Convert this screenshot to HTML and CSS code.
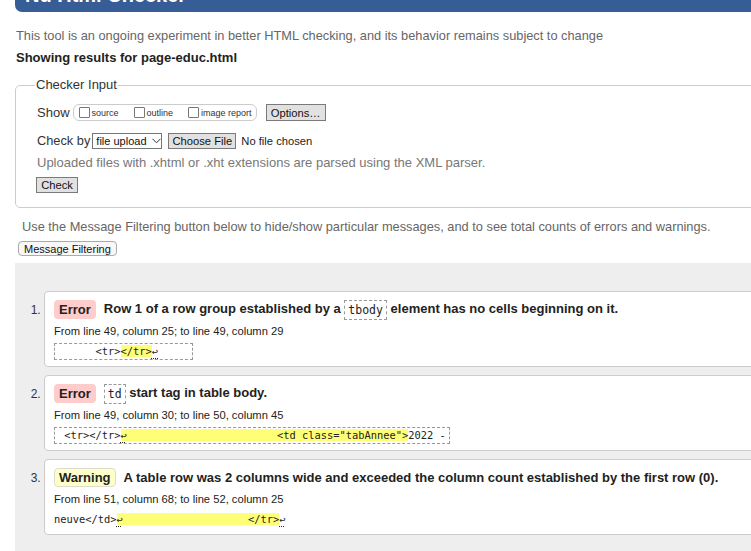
FILE: index.html
```
<!DOCTYPE html>
<html>
<head>
<meta charset="utf-8">
<link rel="stylesheet" href="styles.css">
</head>
<body>
<div class="page">
  <h1 class="hdr"><span class="hdr-text">Nu Html Checker</span></h1>
  <p class="intro">This tool is an ongoing experiment in better HTML checking, and its behavior remains subject to change</p>
  <p class="results">Showing results for page-educ.html</p>
  <fieldset class="checker">
    <legend class="legend">Checker Input</legend>
    <div class="row row-show">
      <span class="lbl">Show</span>
      <span class="opts">
        <span class="opt"><span class="cb"></span>source</span>
        <span class="opt"><span class="cb"></span>outline</span>
        <span class="opt opt-last"><span class="cb"></span>image report</span>
      </span>
      <span class="btn btn-options">Options…</span>
    </div>
    <div class="row row-check">
      <span class="lbl">Check by</span>
      <span class="sel">file upload<svg class="chev" width="9" height="6" viewBox="0 0 9 6"><path d="M0.5 0.8 L4.5 4.8 L8.5 0.8" fill="none" stroke="#333" stroke-width="1"/></svg></span>
      <span class="btn btn-file">Choose File</span>
      <span class="nofile">No file chosen</span>
    </div>
    <p class="hint">Uploaded files with .xhtml or .xht extensions are parsed using the XML parser.</p>
    <div class="row"><span class="btn btn-check">Check</span></div>
  </fieldset>
  <p class="filter-note">Use the Message Filtering button below to hide/show particular messages, and to see total counts of errors and warnings.</p>
  <span class="btn-filter">Message Filtering</span>
  <div class="results-area">
    <ol class="msgs">
      <li class="msg">
        <p class="msg-head"><strong class="badge badge-error">Error</strong><span class="msg-text">Row 1 of a row group established by a <code class="code">tbody</code> element has no cells beginning on it.</span></p>
        <p class="loc">From line 49, column 25; to line 49, column 29</p>
        <p class="extract boxed"><code>      &lt;tr&gt;<b class="hl">&lt;/tr&gt;</b><span class="lf">↩</span>     </code></p>
      </li>
      <li class="msg">
        <p class="msg-head"><strong class="badge badge-error">Error</strong><span class="msg-text"><code class="code">td</code> start tag in table body.</span></p>
        <p class="loc">From line 49, column 30; to line 50, column 45</p>
        <p class="extract boxed"><code> &lt;tr&gt;&lt;/tr&gt;<b class="hl"><span class="lf">↩</span>                        &lt;td class="tabAnnee"&gt;</b>2022 -</code></p>
      </li>
      <li class="msg">
        <p class="msg-head"><strong class="badge badge-warn">Warning</strong><span class="msg-text">A table row was 2 columns wide and exceeded the column count established by the first row (0).</span></p>
        <p class="loc">From line 51, column 68; to line 52, column 25</p>
        <p class="extract plain"><code>neuve&lt;/td&gt;<b class="hl"><span class="lf">↩</span>                    &lt;/tr&gt;</b><span class="lf">↩</span></code></p>
      </li>
    </ol>
  </div>
</div>
</body>
</html>
```
FILE: styles.css
```
html, body {
  margin: 0;
  padding: 0;
  overflow: hidden;
  background: #fff;
}
body {
  font-family: "Liberation Sans", Arial, sans-serif;
  font-size: 13px;
  color: #222;
}
.page {
  width: 800px;
  padding-left: 15px;
}
.hdr {
  margin: 0;
  height: 12px;
  overflow: hidden;
  background: #365d95;
  border-bottom-left-radius: 7px;
  padding-left: 10px;
  color: #fff;
  font-size: 20px;
  line-height: 20px;
  font-weight: bold;
}
.hdr-text {
  display: block;
  margin-top: -15px;
}
p { margin: 0; }
.intro {
  margin-top: 16px;
  margin-left: 1px;
  line-height: 16px;
  font-size: 12.8px;
  color: #666;
}
.results {
  margin-top: 6px;
  margin-left: 1px;
  line-height: 16px;
  font-weight: bold;
  color: #222;
}
.checker {
  margin: 11px 0 0 0;
  padding: 0 0 14px 21px;
  border: 1px solid #ccc;
  border-radius: 5px;
  min-width: 0;
}
.legend {
  padding: 0 1px;
  margin-left: -2px;
  line-height: 16px;
  color: #333;
}
.row {
  display: flex;
  align-items: center;
  height: 17px;
}
.row-show { margin-top: 11px; }
.row-check { margin-top: 12px; height: 16px; }
.lbl {
  color: #333;
  line-height: 16px;
}
.row-show .lbl { margin-right: 3px; }
.row-check .lbl { margin-right: 2px; font-size: 12.8px; }
.opts {
  display: flex;
  align-items: center;
  height: 15px;
  border: 1px solid #ccc;
  border-radius: 6px;
  padding: 0 4px 0 5px;
  font-size: 9px;
  color: #333;
}
.opt {
  display: flex;
  align-items: center;
  margin-right: 15px;
}
.opt-last { margin-right: 0; }
.cb {
  box-sizing: border-box;
  width: 11px;
  height: 11px;
  border: 1px solid #777;
  border-radius: 1px;
  margin-right: 2px;
  background: #fff;
}
.btn {
  box-sizing: border-box;
  display: inline-flex;
  align-items: center;
  justify-content: center;
  height: 17px;
  border: 1px solid #7a7a7a;
  background: #e1e1e1;
  font-size: 11.2px;
  color: #111;
}
.btn-options { width: 60px; margin-left: 9px; }
.btn-file { width: 68px; height: 16px; margin-left: 6px; }
.nofile { font-size: 11.2px; margin-left: 5px; color: #222; }
.sel {
  box-sizing: border-box;
  display: inline-flex;
  align-items: center;
  width: 70px;
  height: 16px;
  border: 1px solid #767676;
  background: #fff;
  font-size: 11px;
  white-space: nowrap;
  padding-left: 3px;
  color: #111;
}
.chev { margin-left: 5px; }
.hint {
  margin-top: 6px;
  line-height: 16px;
  color: #777;
}
.hint + .row { margin-top: 6px; height: 16px; }
.btn-check { width: 42px; height: 16px; margin-left: -1px; }
.filter-note {
  margin-top: 11px;
  margin-left: 7px;
  line-height: 16px;
  font-size: 12.8px;
  color: #666;
}
.btn-filter {
  display: inline-flex;
  align-items: center;
  box-sizing: border-box;
  height: 15px;
  margin-top: 6px;
  margin-left: 3px;
  padding: 0 5px;
  border: 1px solid #aaa;
  border-radius: 4px;
  background: #f8f8f8;
  font-size: 11px;
  color: #111;
}
.results-area {
  margin-top: 7px;
  background: #eee;
  padding: 28px 0 16px 0;
}
.msgs {
  margin: 0;
  padding: 0 0 0 29px;
  list-style: decimal;
}
.msg {
  box-sizing: border-box;
  height: 76px;
  margin-bottom: 8px;
  padding: 7px 0 0 9px;
  background: #fff;
  border: 1px solid #ccc;
  border-radius: 4px 0 0 4px;
  font-size: 12px;
}
.msg::marker {
  font-size: 12px;
  color: #333;
}
.msg-head {
  display: flex;
  align-items: center;
  height: 21px;
  font-size: 13px;
  font-weight: bold;
}
.badge {
  display: inline-block;
  padding: 1px 5px;
  line-height: 17px;
  border-radius: 4px;
  margin-right: 8px;
  font-weight: bold;
  color: #222;
}
.badge-error { background: #fcc; }
.badge-warn { background: #ffc; border: 1px solid #ddc; padding: 0 4px; }
.code {
  display: inline-block;
  font-family: "DejaVu Sans Mono", monospace;
  font-weight: normal;
  font-size: 11.5px;
  line-height: 14px;
  padding: 2px 3px;
  border: 1px dashed #999;
  color: #222;
  vertical-align: middle;
}
.loc {
  margin-top: 4px;
  font-size: 11.2px;
  line-height: 14px;
  color: #222;
}
.extract {
  margin-top: 5px;
  display: inline-block;
  box-sizing: border-box;
  height: 17px;
  padding: 0 3px;
  white-space: pre;
  font-size: 10.4px;
  line-height: 15px;
}
.extract code {
  font-family: "DejaVu Sans Mono", monospace;
  font-size: 10.4px;
}
.boxed { border: 1px dashed #999; }
.plain { padding: 1px 0 0 0; }
.hl {
  font-weight: normal;
  background: #ff7;
}
.lf {
  text-decoration: underline dotted;
  text-underline-offset: 3px;
}
```
